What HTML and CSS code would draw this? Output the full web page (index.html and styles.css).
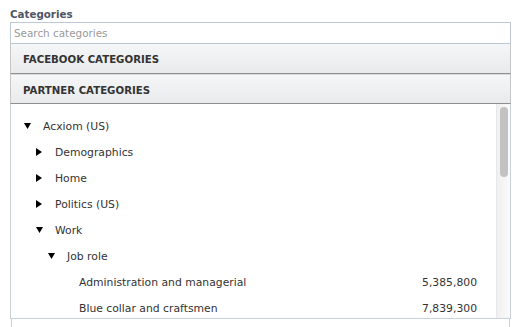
FILE: index.html
```html
<!DOCTYPE html>
<html>
<head>
<meta charset="utf-8">
<link rel="stylesheet" href="styles.css">
</head>
<body>
<div class="panel">
  <div class="label">Categories</div>
  <div class="search">Search categories</div>
  <div class="section">FACEBOOK CATEGORIES</div>
  <div class="section">PARTNER CATEGORIES</div>
  <div class="list">
    <div class="tree">
      <div class="row l0"><span class="tog"><svg width="7" height="6" viewBox="0 0 7 6"><path d="M0 0H7L3.5 6Z"/></svg></span><span class="name">Acxiom (US)</span></div>
      <div class="row l1"><span class="tog"><svg width="6" height="8" viewBox="0 0 6 8"><path d="M0 0L6 4L0 8Z"/></svg></span><span class="name">Demographics</span></div>
      <div class="row l1"><span class="tog"><svg width="6" height="8" viewBox="0 0 6 8"><path d="M0 0L6 4L0 8Z"/></svg></span><span class="name">Home</span></div>
      <div class="row l1"><span class="tog"><svg width="6" height="8" viewBox="0 0 6 8"><path d="M0 0L6 4L0 8Z"/></svg></span><span class="name">Politics (US)</span></div>
      <div class="row l1"><span class="tog"><svg width="7" height="6" viewBox="0 0 7 6"><path d="M0 0H7L3.5 6Z"/></svg></span><span class="name">Work</span></div>
      <div class="row l2"><span class="tog"><svg width="7" height="6" viewBox="0 0 7 6"><path d="M0 0H7L3.5 6Z"/></svg></span><span class="name">Job role</span></div>
      <div class="row l3"><span class="tog"></span><span class="name">Administration and managerial</span><span class="count">5,385,800</span></div>
      <div class="row l3"><span class="tog"></span><span class="name">Blue collar and craftsmen</span><span class="count">7,839,300</span></div>
    </div>
    <div class="scrollbar"><div class="thumb"></div></div>
  </div>
  <div class="below"></div>
</div>
</body>
</html>
```
FILE: styles.css
```css
html, body {
  margin: 0;
  padding: 0;
  background: #fff;
}
body {
  font-family: "DejaVu Sans", "Lucida Grande", sans-serif;
  color: #333;
}
.panel {
  margin-left: 10px;
  width: 501px;
}
.label {
  font-size: 10.3px;
  font-weight: bold;
  color: #4e5665;
  height: 22px;
  line-height: 14px;
  padding-top: 7px;
  box-sizing: border-box;
}
.search {
  height: 22px;
  box-sizing: border-box;
  border: 1px solid #bdc7d8;
  font-size: 10.4px;
  line-height: 21px;
  padding-left: 3px;
  color: #9a9a9a;
}
.section {
  height: 30px;
  box-sizing: border-box;
  border: 1px solid #c6c6c6;
  border-top: 0;
  border-bottom: 1px solid #8f8f8f;
  background: linear-gradient(#f5f6f7, #e9eaeb);
  font-size: 10.2px;
  font-weight: bold;
  color: #333;
  line-height: 31px;
  padding-left: 12px;
  overflow: hidden;
}
.section + .section {
  border-top: 1px solid #d9d9d9;
}
.list {
  display: flex;
  height: 215px;
  box-sizing: border-box;
  border: 1px solid #c9d0da;
  border-top: 0;
}
.tree {
  flex: 1;
  padding-top: 9px;
  overflow: hidden;
}
.row {
  display: flex;
  align-items: center;
  height: 26px;
  font-size: 10.8px;
  color: #333;
  padding-right: 19px;
}
.l0 { padding-left: 13px; }
.l1 { padding-left: 25px; }
.l2 { padding-left: 37px; }
.l3 { padding-left: 49px; }
.tog {
  width: 19px;
  flex: none;
  display: flex;
  align-items: center;
}
.tog svg { fill: #000; display: block; }
.name { flex: 1; }
.count { text-align: right; }
.scrollbar {
  width: 14px;
  flex: none;
  background: linear-gradient(to right, #f0f0f0, #fafafa);
  border-left: 1px solid #e8e8e8;
  padding-top: 3px;
  box-sizing: border-box;
}
.thumb {
  width: 8px;
  height: 70px;
  margin-left: 3px;
  border-radius: 4px;
  background: #c2c2c2;
}
.below {
  height: 10px;
  margin: 0 1px;
  border-left: 1px solid #c9d0da;
  border-right: 1px solid #c9d0da;
}
```
